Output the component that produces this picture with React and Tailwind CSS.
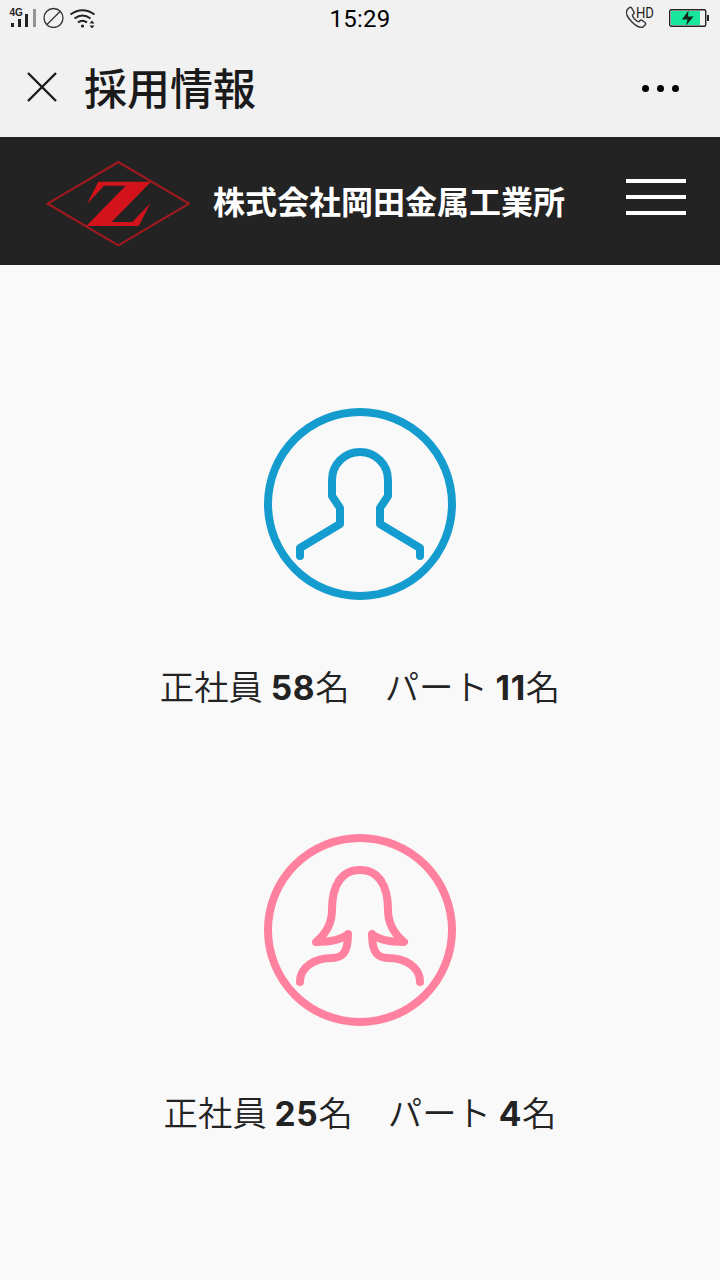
const people = [
  { id: 'men', Icon: ManIcon, fullTime: 58, partTime: 11 },
  { id: 'women', Icon: WomanIcon, fullTime: 25, partTime: 4 },
]

function SignalIcon() {
  return (
    <svg className="h-[24px] w-[90px]" viewBox="0 0 90 24" fill="none">
      <text
        x="0.5"
        y="12"
        fontSize="10"
        fontWeight="700"
        fill="#222"
        fontFamily="Liberation Sans, sans-serif"
      >
        4G
      </text>
      <path d="M2 19h3v4H2zM9 15h3v8H9zM16 10h3v13h-3z" fill="#222" />
      <path d="M24 5h3v18h-3z" fill="#959595" />
      <circle cx="44.500" cy="14" r="9.500" stroke="#333" strokeWidth="1.300" />
      <path d="m38 20.500 13-13" stroke="#333" strokeWidth="1.300" />
      <g stroke="#222" strokeWidth="2">
        <path d="M61.500 10.500q12-8.500 24 0" />
        <path d="M65.500 14.500q8-6 16 0" />
        <path d="M69 18.500q4.500-3.500 9 0" />
      </g>
      <circle cx="73.500" cy="22" r="1.600" fill="#222" />
      <path d="m80.500 19.500 2.500-3 2.500 3zM80.500 21.500l2.500 3 2.500-3z" fill="#222" />
    </svg>
  )
}

function CallIcon() {
  return (
    <svg className="h-[24px] w-[30px] overflow-visible" viewBox="0 0 30 24" fill="none">
      <path
        d="M4.500 3.500 2 6c-1.500 3 1 8 5 12s8.500 6 11 5l2.500-2.500c.5-.7.300-1.300-.500-2l-3-2.200c-.7-.5-1.500-.4-2 .2l-1 1.200c-2 .3-7-4.500-6.500-6.700l1.300-1.200c.6-.5.600-1.200.2-1.800L6.500 3.800c-.5-.8-1.300-.9-2-.3Z"
        stroke="#333"
        strokeWidth="1.400"
      />
      <text
        x="11"
        y="13.500"
        fontSize="14"
        textLength="18"
        lengthAdjust="spacingAndGlyphs"
        fill="#222"
        fontFamily="Roboto, sans-serif"
      >
        HD
      </text>
    </svg>
  )
}

function BatteryIcon() {
  return (
    <svg className="h-[18px] w-[41px]" viewBox="0 0 41 18" fill="none">
      <rect x="0.700" y="0.700" width="36" height="16.600" rx="1.500" stroke="#222" strokeWidth="1.400" />
      <path d="M38 6h2v6h-2z" fill="#222" />
      <path d="M2 2h29v14H2z" fill="#18e69c" />
      <path d="m19.500 1.500-6.500 9h5.500l-1.500 6 7.500-9H19z" fill="#16231e" />
    </svg>
  )
}

function StatusBar() {
  return (
    <div className="grid h-9 grid-cols-3 items-start">
      <div className="pl-[9px] pt-[4px]">
        <SignalIcon />
      </div>
      <div className="pt-px text-center font-['Roboto',sans-serif] text-[24px] leading-9 tracking-[0.2px] text-black">
        15:29
      </div>
      <div className="flex justify-end gap-[14px] pr-[10px]">
        <div className="pt-[4px]">
          <CallIcon />
        </div>
        <div className="pt-[9px]">
          <BatteryIcon />
        </div>
      </div>
    </div>
  )
}

function TitleBar() {
  return (
    <div className="flex h-[101px] items-center pl-[27px] pr-[41px] text-[#1a1a1a]">
      <svg className="h-[30px] w-[30px]" viewBox="0 0 30 30" fill="none">
        <path d="m1 1 28 28M29 1 1 29" stroke="currentColor" strokeWidth="2.400" />
      </svg>
      <h1 className="ml-[27px] flex-1 text-[43px] leading-none font-medium">採用情報</h1>
      <div className="mt-1 flex gap-[8px]">
        <span className="size-[7px] rounded-full bg-black" />
        <span className="size-[7px] rounded-full bg-black" />
        <span className="size-[7px] rounded-full bg-black" />
      </div>
    </div>
  )
}

function Logo() {
  return (
    <svg className="mt-[3px] h-[86px] w-[144px]" viewBox="48 57 432 258" fill="none">
      <path d="M53 188 265 63l212 125-212 125Z" stroke="#a0191f" strokeWidth="6.500" />
      <path
        d="M205 122H363L245 243H307L361 187L326 255H169L287 134H222L171 189Z"
        fill="#d3131b"
      />
    </svg>
  )
}

function SiteHeader() {
  return (
    <header className="flex h-32 items-center bg-[#232323] pl-[46px] pr-[34px] text-white">
      <Logo />
      <p className="mb-[2px] ml-[23px] flex-1 text-[32px] leading-none font-bold">
        株式会社岡田金属工業所
      </p>
      <div className="mb-[8px] flex w-[60px] flex-col gap-3">
        <span className="h-1 bg-white" />
        <span className="h-1 bg-white" />
        <span className="h-1 bg-white" />
      </div>
    </header>
  )
}

function ManIcon() {
  return (
    <svg
      className="size-48"
      viewBox="0 0 192 192"
      fill="none"
      stroke="#159ccf"
      strokeWidth="8"
      strokeLinecap="round"
      strokeLinejoin="round"
    >
      <circle cx="96" cy="96" r="92" />
      <path d="M36 148v-8l40-24v-16l-8-12V72a28 28 0 0 1 56 0v16l-8 12v16l40 24v8" />
    </svg>
  )
}

function WomanIcon() {
  return (
    <svg
      className="size-48"
      viewBox="0 0 192 192"
      fill="none"
      stroke="#ff809f"
      strokeWidth="8"
      strokeLinecap="round"
      strokeLinejoin="round"
    >
      <circle cx="96" cy="96" r="92" />
      <path d="M36 148C36 132 52 124 68 124C78 124 84 119 84 100C76 107 64 108 52 108C64 98 68 88 68 76C68 52 77 36 96 36C115 36 124 52 124 76C124 88 128 98 140 108C128 108 116 107 108 100C108 119 114 124 124 124C140 124 156 132 156 148" />
    </svg>
  )
}

function Count({ label, value }) {
  return (
    <span>
      {label}{' '}
      <strong className="font-['Inter',sans-serif] text-[33.5px] font-bold tracking-[0.7px]">
        {value}
      </strong>
      名
    </span>
  )
}

export default function App() {
  return (
    <div className="flex min-h-screen flex-col bg-[#f9f9f9] font-['Noto_Sans_CJK_JP',sans-serif]">
      <div className="bg-[#f1f1f1]">
        <StatusBar />
        <TitleBar />
      </div>
      <SiteHeader />
      <main className="flex flex-col items-center gap-[115px] pt-[143px] text-[#232323]">
        {people.map(({ id, Icon, fullTime, partTime }) => (
          <section key={id} className="flex flex-col items-center">
            <Icon />
            <p className="mt-[55px] flex h-16 items-center gap-[35px] text-[34.4px] font-[350] whitespace-nowrap">
              <Count label="正社員" value={fullTime} />
              <Count label="パート" value={partTime} />
            </p>
          </section>
        ))}
      </main>
    </div>
  )
}
